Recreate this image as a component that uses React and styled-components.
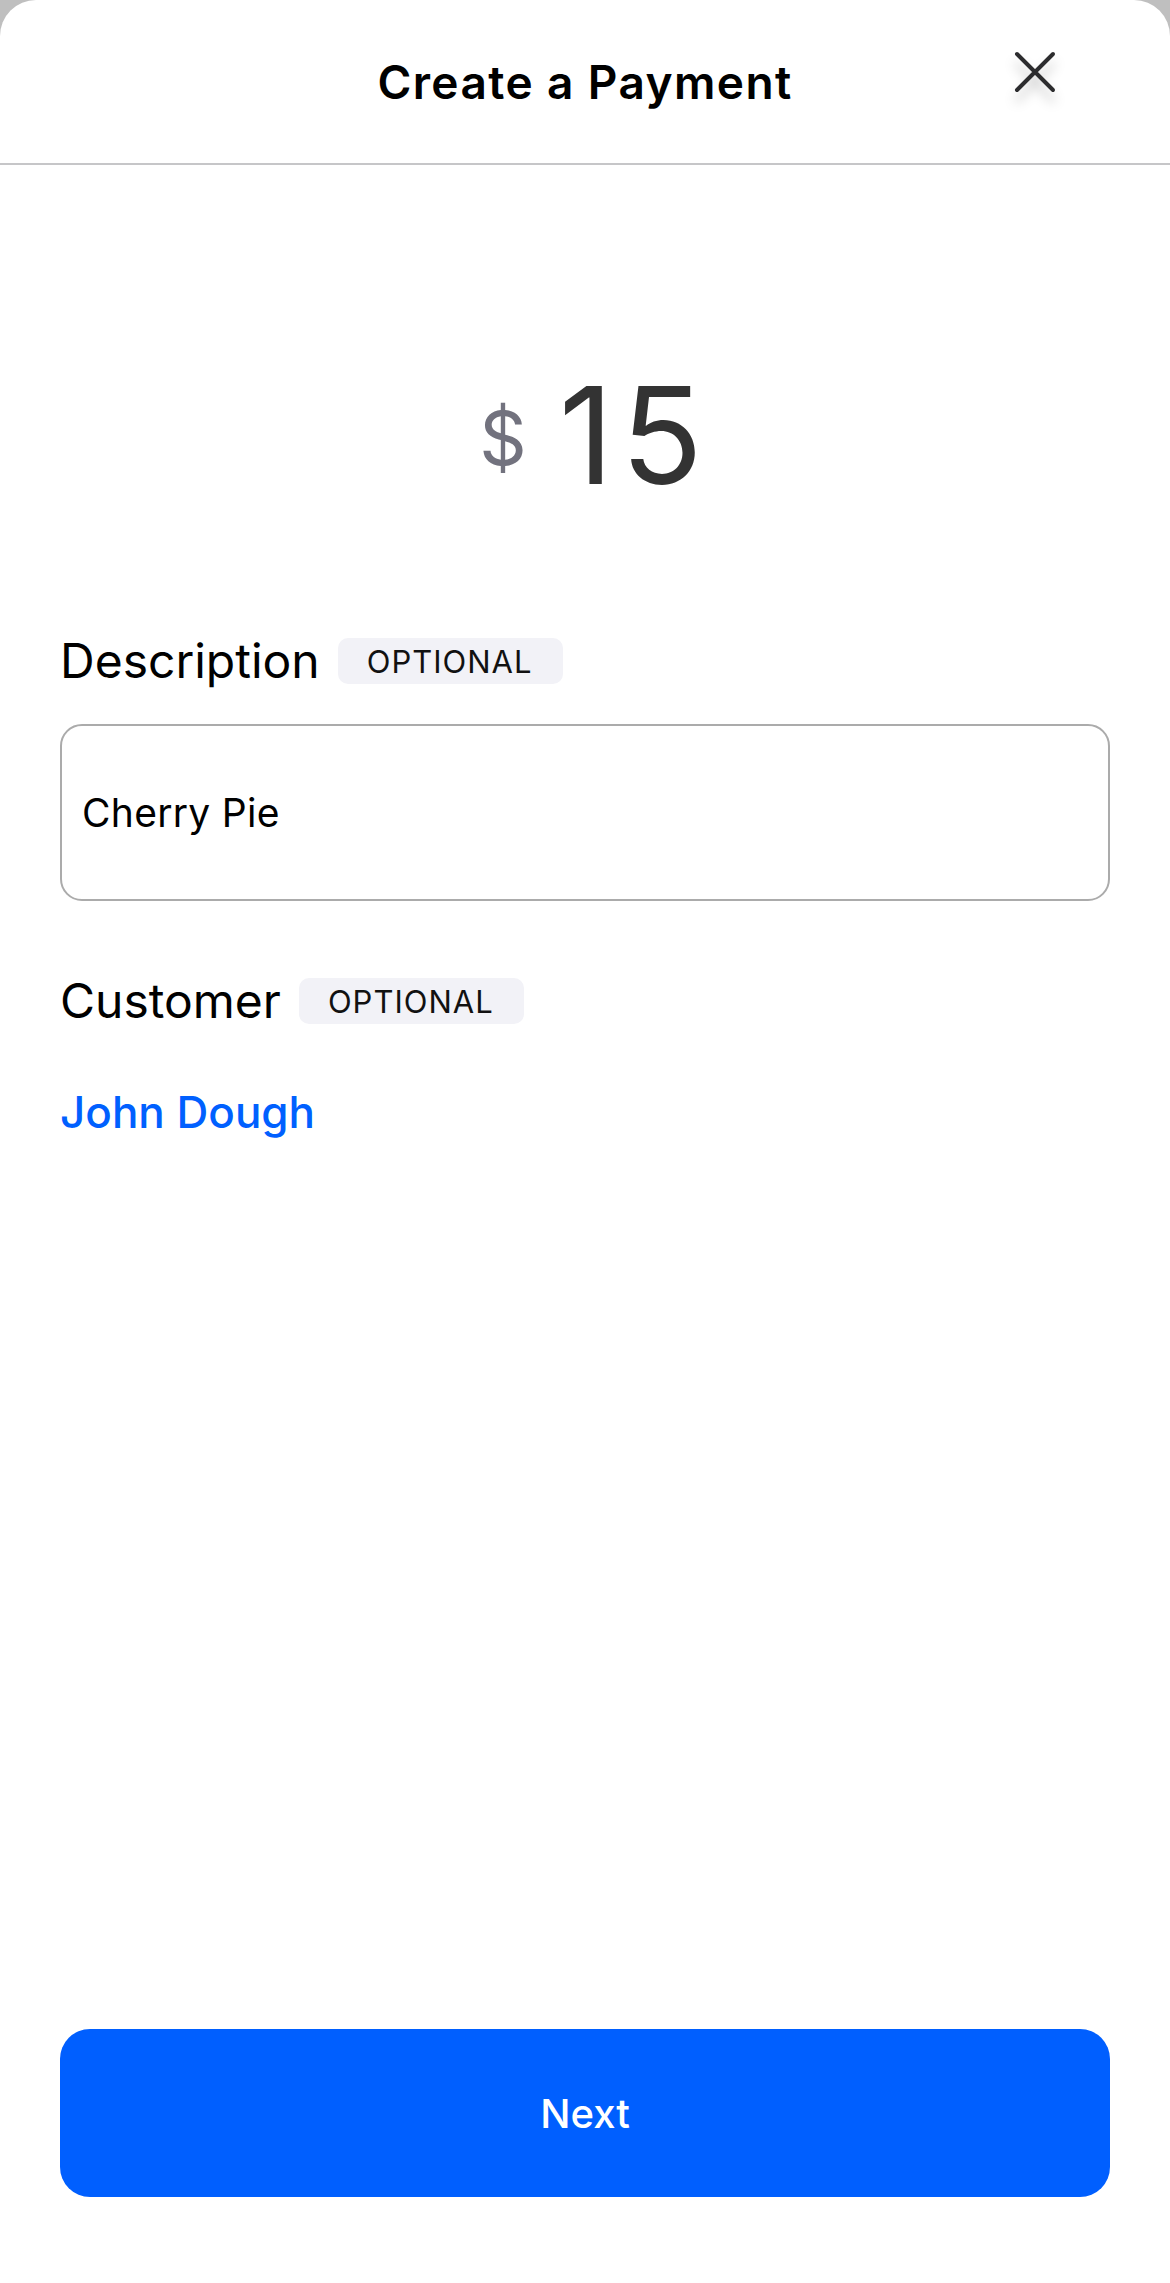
import React from "react";
import styled, { createGlobalStyle } from "styled-components";

const GlobalStyle = createGlobalStyle`
  * { box-sizing: border-box; }
  html, body {
    margin: 0;
    padding: 0;
    background: #bfbfbf;
    font-family: Inter, "Noto Sans", "Liberation Sans", sans-serif;
    -webkit-font-smoothing: antialiased;
  }
`;

const Sheet = styled.div`
  min-height: 2283px;
  background: #ffffff;
  border-radius: 36px 36px 0 0;
  display: flex;
  flex-direction: column;
`;

const Header = styled.header`
  height: 165px;
  display: grid;
  grid-template-columns: 1fr auto 1fr;
  align-items: start;
  border-bottom: 2px solid #c6c6c8;
`;

const Title = styled.h1`
  grid-column: 2;
  margin: 59px 0 0;
  font-size: 46px;
  line-height: 46px;
  font-weight: 600;
  color: #000;
  letter-spacing: 1.4px;
`;

const CloseButton = styled.button`
  grid-column: 3;
  justify-self: end;
  margin: 50px 113px 0 0;
  padding: 0;
  width: 44px;
  height: 44px;
  border: none;
  background: transparent;
  display: flex;
  filter: drop-shadow(0 10px 6px rgba(0, 0, 0, 0.22));
`;

const Body = styled.main`
  flex: 1;
  display: flex;
  flex-direction: column;
  padding: 0 60px;
`;

const AmountRow = styled.div`
  margin-top: 203px;
  padding-left: 12px;
  display: flex;
  justify-content: center;
  align-items: center;
  gap: 32px;
`;

const Currency = styled.span`
  font-size: 74px;
  line-height: 1;
  color: #72727e;
  margin-top: 4px;
`;

const Amount = styled.span`
  font-size: 135px;
  line-height: 135px;
  color: #333333;
  letter-spacing: 7px;
  margin-right: -7px;
`;

const FieldRow = styled.div`
  margin-top: ${(p) => p.$gap}px;
  height: 48px;
  display: flex;
  align-items: center;
  gap: 18px;
`;

const Label = styled.span`
  font-size: 48px;
  line-height: 48px;
  color: #000;
`;

const Badge = styled.span`
  height: 46px;
  padding: 0 30px 0 29px;
  border-radius: 10px;
  background: #f2f2f7;
  display: inline-flex;
  align-items: center;
  font-size: 31px;
  letter-spacing: 1px;
  color: #111;
`;

const TextField = styled.input`
  margin-top: 39px;
  width: 100%;
  height: 177px;
  border: 2px solid #ababab;
  border-radius: 22px;
  padding: 0 20px;
  font-family: inherit;
  font-size: 39px;
  letter-spacing: 0.3px;
  color: #000;
  background: #fff;
  outline: none;
`;

const CustomerLink = styled.a`
  margin-top: 65px;
  align-self: flex-start;
  font-size: 44px;
  line-height: 44px;
  font-weight: 500;
  color: #0060ff;
  text-decoration: none;
`;

const Spacer = styled.div`
  flex: 1;
`;

const PrimaryButton = styled.button`
  margin-bottom: 86px;
  width: 100%;
  height: 168px;
  border: none;
  border-radius: 30px;
  background: #005fff;
  color: #fff;
  font-family: inherit;
  font-size: 40px;
  font-weight: 500;
`;

function CloseIcon() {
  return (
    <svg width="44" height="44" viewBox="0 0 44 44" fill="none">
      <path
        d="M4 4 L40 40 M40 4 L4 40"
        stroke="#2c2c2e"
        strokeWidth="4"
        strokeLinecap="round"
      />
    </svg>
  );
}

export default function App() {
  return (
    <>
      <GlobalStyle />
      <Sheet>
        <Header>
          <Title>Create a Payment</Title>
          <CloseButton aria-label="Close">
            <CloseIcon />
          </CloseButton>
        </Header>
        <Body>
          <AmountRow>
            <Currency>$</Currency>
            <Amount>15</Amount>
          </AmountRow>

          <FieldRow $gap={134}>
            <Label>Description</Label>
            <Badge>OPTIONAL</Badge>
          </FieldRow>
          <TextField readOnly value="Cherry Pie" />

          <FieldRow $gap={76}>
            <Label>Customer</Label>
            <Badge>OPTIONAL</Badge>
          </FieldRow>
          <CustomerLink href="#">John Dough</CustomerLink>

          <Spacer />
          <PrimaryButton>Next</PrimaryButton>
        </Body>
      </Sheet>
    </>
  );
}
